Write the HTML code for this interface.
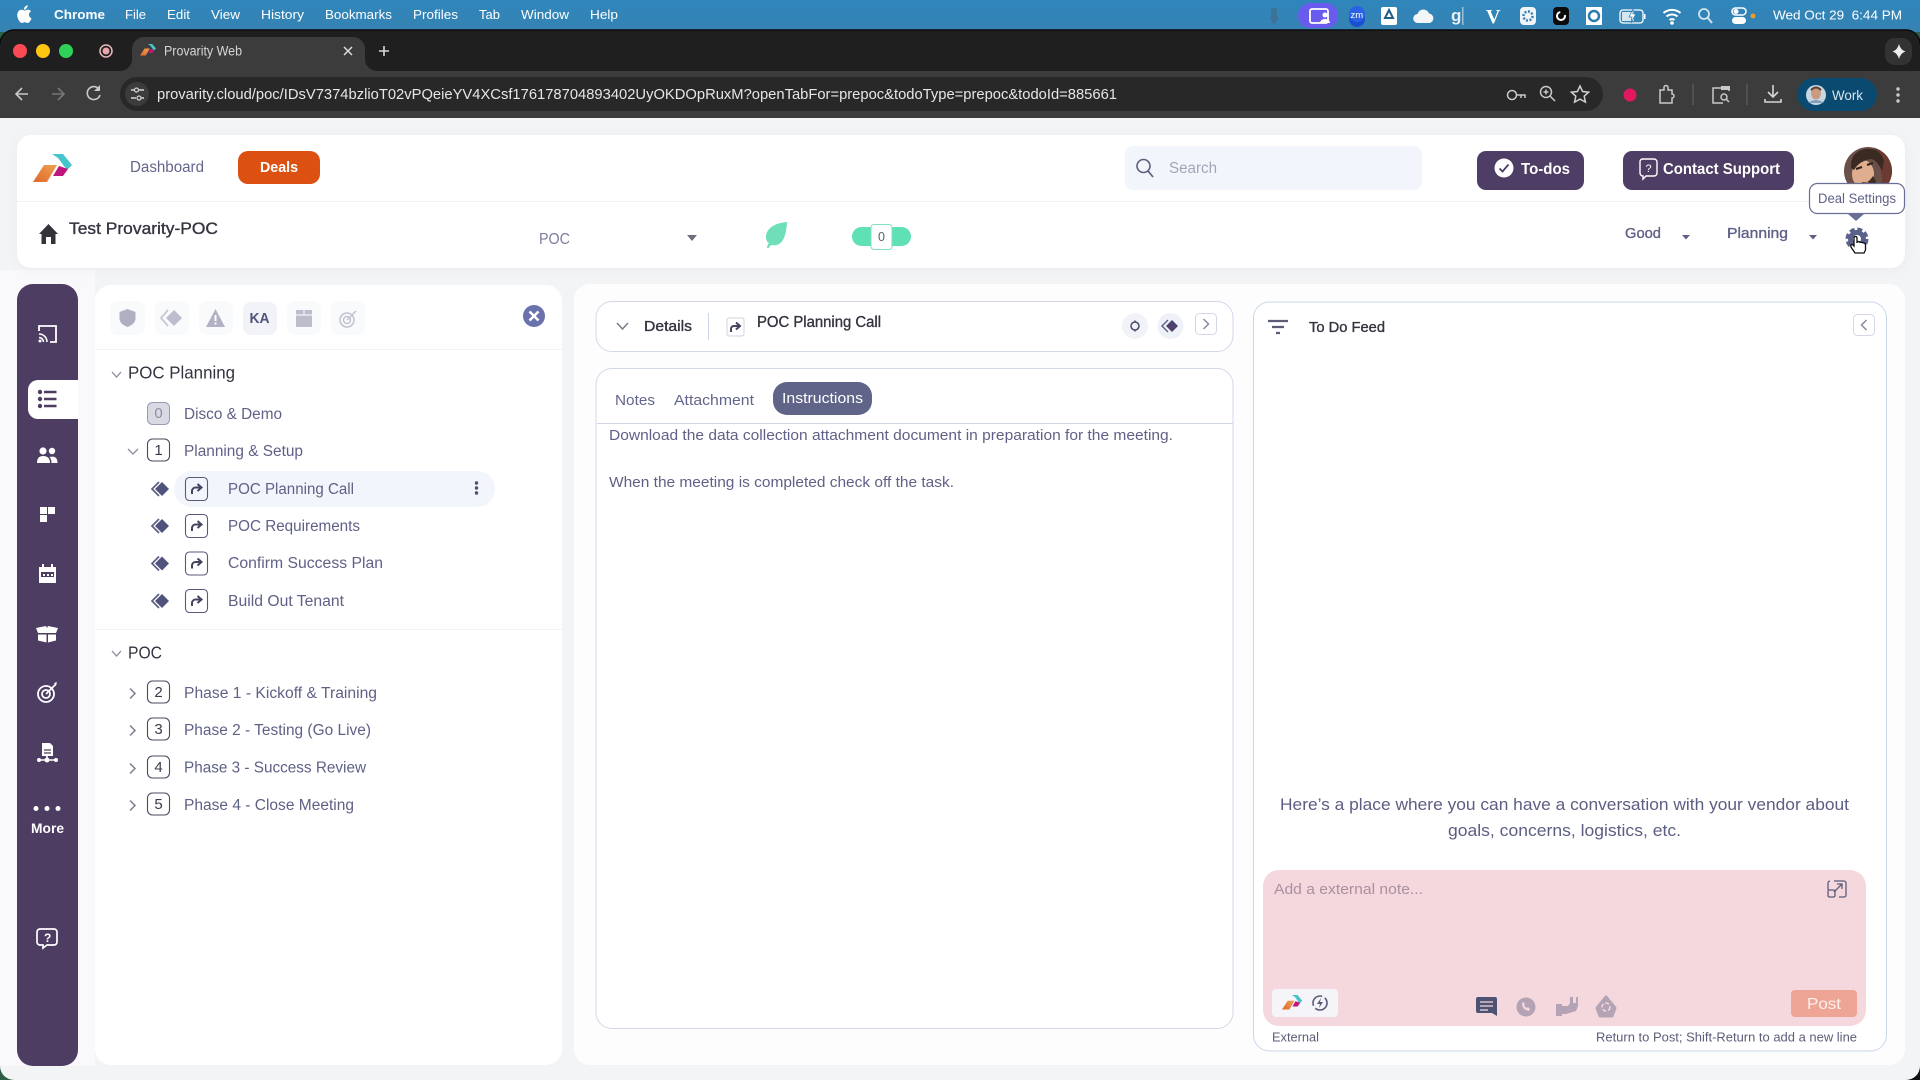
<!DOCTYPE html>
<html><head><meta charset="utf-8"><title>Provarity Web</title>
<style>
html,body{margin:0;padding:0;width:1920px;height:1080px;overflow:hidden;background:#2c5f45}
svg{display:block;position:absolute;left:0;top:0;filter:blur(.3px)}
text{font-family:"Liberation Sans",sans-serif}
.m{fill:#fff;font-size:13px}
.b{font-weight:bold}
.n{fill:#5f6186;font-size:15.5px}
.d{fill:#33343f}
.md{stroke-width:.35px}
</style></head><body>
<svg width="1920" height="1080" viewBox="0 0 1920 1080" xmlns="http://www.w3.org/2000/svg">
<defs>
<linearGradient id="mb" x1="0" y1="0" x2="0" y2="1"><stop offset="0" stop-color="#2f86bb"/><stop offset="1" stop-color="#3682b2"/></linearGradient>
<linearGradient id="lo" x1="0" y1="1" x2="1" y2="0"><stop offset="0" stop-color="#e0692c"/><stop offset="1" stop-color="#eea050"/></linearGradient>
<clipPath id="av"><circle cx="1868" cy="171" r="24"/></clipPath>
</defs>
<rect x="960" y="1040" width="960" height="40" fill="#111"/>
<rect width="1920" height="32" fill="url(#mb)"/>
<!-- window -->
<rect x="0" y="30" width="1920" height="1050" rx="14" fill="#1f1f1f"/>
<path d="M0 44a14 14 0 0 1 14-14H1906a14 14 0 0 1 14 14" fill="none" stroke="#0b0b0b" stroke-width="1.5"/>
<path d="M0 71H1920V1066a14 14 0 0 1-14 14H14a14 14 0 0 1-14-14Z" fill="#3c3c3c"/>
<path d="M0 118H1920V1066a14 14 0 0 1-14 14H14a14 14 0 0 1-14-14Z" fill="#f3f4f6"/>
<rect x="0" y="270" width="95" height="796" fill="#f9f9fb"/>
<!-- menubar -->
<path d="M26.5 9.2c.8-1 1.3-1.9 1.2-3-1 .1-2.1.7-2.8 1.600-.6.7-1.100 1.800-1 2.800 1.100.1 2-.5 2.600-1.400Zm1.300 1.600c-1.400-.1-2.600.8-3.300.8-.7 0-1.700-.8-2.900-.8-1.500 0-2.900.9-3.600 2.200-1.600 2.700-.4 6.600 1.100 8.800.7 1.100 1.600 2.300 2.800 2.200 1.100 0 1.500-.7 2.900-.7 1.300 0 1.700.7 2.900.7 1.200 0 1.900-1.100 2.600-2.100.8-1.200 1.200-2.400 1.200-2.500-1.400-.6-2.500-2-2.500-3.700 0-1.500.8-2.700 2.100-3.400-.8-1.100-2-1.700-3.300-1.700Z" fill="#fff" transform="translate(0,-1)"/>
<text x="54" y="19" class="m b" textLength="51" lengthAdjust="spacingAndGlyphs">Chrome</text>
<text x="125" y="19" class="m" textLength="21" lengthAdjust="spacingAndGlyphs">File</text>
<text x="167" y="19" class="m" textLength="23" lengthAdjust="spacingAndGlyphs">Edit</text>
<text x="211" y="19" class="m" textLength="29" lengthAdjust="spacingAndGlyphs">View</text>
<text x="261" y="19" class="m" textLength="43" lengthAdjust="spacingAndGlyphs">History</text>
<text x="325" y="19" class="m" textLength="67" lengthAdjust="spacingAndGlyphs">Bookmarks</text>
<text x="413" y="19" class="m" textLength="45" lengthAdjust="spacingAndGlyphs">Profiles</text>
<text x="479" y="19" class="m" textLength="21" lengthAdjust="spacingAndGlyphs">Tab</text>
<text x="521" y="19" class="m" textLength="48" lengthAdjust="spacingAndGlyphs">Window</text>
<text x="590" y="19" class="m" textLength="28" lengthAdjust="spacingAndGlyphs">Help</text>
<!-- status -->
<path d="M1271 8h6v9l2 0-5 8-5-8h2Z" fill="#3f6f8f" opacity=".8"/>
<rect x="1298" y="3" width="40" height="25" rx="12" fill="#6a5bef"/>
<rect x="1310" y="9" width="18" height="14" rx="2" fill="none" stroke="#fff" stroke-width="1.800"/>
<circle cx="1325" cy="15" r="2.500" fill="#fff"/><path d="M1320 23a5 4 0 0 1 10 0Z" fill="#fff"/>
<circle cx="1357" cy="19" r="8" fill="#1b4fd1"/><circle cx="1357" cy="14" r="8" fill="#2a62e6"/><text x="1350.500" y="18" font-size="9.500" fill="#fff">zm</text>
<rect x="1381" y="7" width="16" height="18" rx="2" fill="#fff"/><path d="M1389 10l4 8h-8Z" fill="none" stroke="#1f5f8a" stroke-width="2"/>
<path d="M1418 23a4.500 4.500 0 0 1-.5-9 6 6 0 0 1 11.500-.5 4.800 4.800 0 0 1 .5 9.500Z" fill="#f2f6f9"/>
<text x="1451" y="21" font-size="17" font-weight="bold" fill="#e6eff5">g</text><rect x="1462" y="7" width="1.500" height="18" fill="#9cc0d8"/>
<text x="1486" y="23" font-size="20" font-weight="bold" fill="#fff" style="font-family:'Liberation Serif',serif">V</text>
<rect x="1520" y="7" width="16" height="18" rx="4" fill="#eef4f8"/><circle cx="1528" cy="16" r="4.500" fill="none" stroke="#3a80b0" stroke-width="2.500" stroke-dasharray="2 1.500"/>
<rect x="1553" y="7" width="16" height="18" rx="4" fill="#0b0b0b"/><circle cx="1561" cy="16" r="4" fill="none" stroke="#fff" stroke-width="2" stroke-dasharray="18 6"/>
<rect x="1586" y="7" width="16" height="18" fill="#fff"/><circle cx="1594" cy="16" r="5" fill="none" stroke="#2e7cab" stroke-width="2.500"/>
<rect x="1620" y="10" width="23" height="13" rx="3" fill="none" stroke="#fff" stroke-width="1.300"/><rect x="1622" y="12" width="12" height="9" fill="#fff" opacity=".8"/><path d="M1633 9l-4 8h3l-1 6 5-9h-3Z" fill="#fff" stroke="#3682b2" stroke-width=".8"/><rect x="1644" y="14" width="1.500" height="5" fill="#fff"/>
<path d="M1663.500 13a13 13 0 0 1 17 0M1666.500 16.500a8.500 8.500 0 0 1 11 0M1669.500 20a4 4 0 0 1 5 0" fill="none" stroke="#fff" stroke-width="2"/><circle cx="1672" cy="23" r="1.800" fill="#fff"/>
<circle cx="1704" cy="14" r="5" fill="none" stroke="#cfe3ef" stroke-width="1.800"/><path d="M1708 18l4 5" stroke="#cfe3ef" stroke-width="2"/>
<rect x="1732" y="8" width="14" height="7" rx="3.500" fill="none" stroke="#fff" stroke-width="1.500"/><rect x="1732" y="17" width="14" height="7" rx="3.500" fill="#fff"/><circle cx="1736" cy="11.500" r="2.500" fill="#fff"/>
<circle cx="1753" cy="16" r="2.500" fill="#f0972e"/>
<text x="1773" y="19.500" class="m" textLength="129" lengthAdjust="spacingAndGlyphs" xml:space="preserve">Wed Oct 29  6:44 PM</text>
<!-- tab strip -->
<circle cx="20" cy="51" r="7" fill="#fc4a55"/><circle cx="43" cy="51" r="7" fill="#fdc613"/><circle cx="66" cy="51" r="7" fill="#2fd158"/>
<circle cx="106" cy="51" r="6" fill="none" stroke="#e9b8bc" stroke-width="1.500"/><circle cx="106" cy="51" r="3.500" fill="#e9a5ab"/>
<path d="M120 71a12 12 0 0 0 12-12V49a12 12 0 0 1 12-12H353a12 12 0 0 1 12 12V59a12 12 0 0 0 12 12Z" fill="#3c3c3c"/>
<g transform="translate(140,44) scale(.41) translate(-33,-154)"><path d="M33 182L44 165H57L47 182Z" fill="url(#lo)"/><path d="M52 154H63L72 165L67 170L58 158Z" fill="#47c4cc"/><path d="M53 176L59 166L68 169L63 176Z" fill="#c0167c"/></g>
<text x="164" y="55.500" font-size="13.500" fill="#d6d6d6" textLength="78" lengthAdjust="spacingAndGlyphs">Provarity Web</text>
<path d="M344 47l8 8M352 47l-8 8" stroke="#ddd" stroke-width="1.500"/>
<path d="M384 46v10M379 51h10" stroke="#d8d8d8" stroke-width="1.600"/>
<rect x="1885" y="38" width="27" height="27" rx="10" fill="#333"/>
<path d="M1899 44q1.500 6 6.500 7.500q-5 1.500-6.500 7.500q-1.500-6-6.500-7.500q5-1.500 6.500-7.500Z" fill="#eee"/>
<!-- toolbar -->
<path d="M28 94H17M22 88l-6 6 6 6" fill="none" stroke="#c9c9c9" stroke-width="1.600"/>
<path d="M52 94H63M58 88l6 6-6 6" fill="none" stroke="#777" stroke-width="1.600"/>
<path d="M99.500 90a6.500 6.500 0 1 0 .5 5" fill="none" stroke="#c9c9c9" stroke-width="1.600"/><path d="M100 85v6h-6" fill="#c9c9c9"/>
<rect x="120" y="77" width="1483" height="34" rx="17" fill="#282828"/>
<circle cx="137" cy="94" r="12" fill="#3c3c3c"/>
<path d="M131 90h3M139 90h5M131 98h5M141 98h3" stroke="#d5d5d5" stroke-width="1.400"/><circle cx="136.500" cy="90" r="2" fill="none" stroke="#d5d5d5" stroke-width="1.200"/><circle cx="139" cy="98" r="2" fill="none" stroke="#d5d5d5" stroke-width="1.200"/>
<text x="157" y="99" font-size="14.500" fill="#e6e6e6" textLength="960" lengthAdjust="spacingAndGlyphs">provarity.cloud/poc/IDsV7374bzlioT02vPQeieYV4XCsf176178704893402UyOKDOpRuxM?openTabFor=prepoc&amp;todoType=prepoc&amp;todoId=885661</text>
<circle cx="1512" cy="95" r="4.500" fill="none" stroke="#c9c9c9" stroke-width="1.500"/><path d="M1516 95h9v3M1521 95v3" fill="none" stroke="#c9c9c9" stroke-width="1.500"/>
<circle cx="1546" cy="92" r="5.500" fill="none" stroke="#c9c9c9" stroke-width="1.500"/><path d="M1550 96l5 5M1546 89.500v5M1543.500 92h5" stroke="#c9c9c9" stroke-width="1.500"/>
<path d="M1580 86l2.600 5.500 6 .7-4.400 4 1.200 5.900-5.400-3-5.400 3 1.200-5.900-4.400-4 6-.7Z" fill="none" stroke="#d0d0d0" stroke-width="1.500"/>
<circle cx="1630" cy="95" r="6.500" fill="#e0185f"/>
<path d="M1660 90h4v-2.500a2 2 0 0 1 4 0V90h4v4a2 2 0 0 1 0 4v5h-12Z" fill="none" stroke="#c9c9c9" stroke-width="1.500"/>
<rect x="1692.500" y="84" width="1" height="21" fill="#666"/>
<path d="M1717 88h-4v15h10M1717 88h12v3" fill="none" stroke="#c9c9c9" stroke-width="1.500"/><rect x="1721" y="86" width="9" height="4" fill="#c9c9c9"/><circle cx="1724" cy="97" r="3" fill="none" stroke="#c9c9c9" stroke-width="1.500"/><path d="M1726 99l3 3" stroke="#c9c9c9" stroke-width="1.500"/>
<rect x="1746.500" y="84" width="1" height="21" fill="#666"/>
<path d="M1773 85v12M1768 92l5 5 5-5M1765 99v3h16v-3" fill="none" stroke="#d5d5d5" stroke-width="1.600"/>
<rect x="1797" y="78" width="80" height="33" rx="16.500" fill="#0b4a70"/>
<circle cx="1816" cy="95" r="10" fill="#c7d6e2"/><ellipse cx="1816" cy="93" rx="5" ry="6.500" fill="#c99a7d"/><path d="M1811 90q5-5 10 0" stroke="#5b4034" stroke-width="2" fill="none"/><path d="M1808 103q8-6 16 0" fill="#7ea0bc"/>
<text x="1832" y="100" font-size="14" fill="#d5e5ef" textLength="31" lengthAdjust="spacingAndGlyphs">Work</text>
<circle cx="1898" cy="89" r="1.700" fill="#ccc"/><circle cx="1898" cy="95" r="1.700" fill="#ccc"/><circle cx="1898" cy="101" r="1.700" fill="#ccc"/>
<!-- header card -->
<rect x="17" y="135" width="1888" height="133" rx="14" fill="#fff" style="filter:drop-shadow(0 2px 6px rgba(70,70,100,.05))"/>
<rect x="17" y="201" width="1888" height="1" fill="#f0f1f4"/>
<path d="M33 182L44 165H57L47 182Z" fill="url(#lo)"/><path d="M52 154H63L72 165L67 170L58 158Z" fill="#47c4cc"/><path d="M53 176L59 166L68 169L63 176Z" fill="#c0167c"/>
<text x="130" y="172" font-size="15.500" fill="#64658c" textLength="74" lengthAdjust="spacingAndGlyphs">Dashboard</text>
<rect x="238" y="151" width="82" height="33" rx="10" fill="#dc5012"/>
<text x="260" y="172" font-size="15" font-weight="bold" fill="#fff" textLength="38" lengthAdjust="spacingAndGlyphs">Deals</text>
<rect x="1125" y="146" width="297" height="44" rx="8" fill="#f3f5fd"/>
<circle cx="1143.500" cy="166" r="6.500" fill="none" stroke="#5c5e7c" stroke-width="1.600"/><path d="M1148 171l5 6" stroke="#5c5e7c" stroke-width="1.700"/>
<text x="1169" y="173" font-size="15.500" fill="#a4a5b5" textLength="48" lengthAdjust="spacingAndGlyphs">Search</text>
<rect x="1477" y="151" width="107" height="39" rx="9" fill="#4e3d64"/>
<circle cx="1504" cy="168" r="9.500" fill="#fff"/><path d="M1499.500 168.500l3 3 6-7" fill="none" stroke="#4e3d64" stroke-width="1.800"/>
<text x="1521" y="174" font-size="15.500" font-weight="bold" fill="#fff" textLength="49" lengthAdjust="spacingAndGlyphs">To-dos</text>
<rect x="1623" y="151" width="171" height="39" rx="9" fill="#4e3d64"/>
<path d="M1642 159h12a3 3 0 0 1 3 3v11a3 3 0 0 1-3 3h-8l-3 3v-3a3 3 0 0 1-3-3v-11a3 3 0 0 1 2-3Z" fill="none" stroke="#fff" stroke-width="1.400"/><text x="1645.500" y="172" font-size="11" fill="#fff">?</text>
<text x="1663" y="174" font-size="15.500" font-weight="bold" fill="#fff" textLength="117" lengthAdjust="spacingAndGlyphs">Contact Support</text>
<!-- avatar -->
<g clip-path="url(#av)"><rect x="1844" y="147" width="48" height="48" fill="#6a5048"/><path d="M1874 147h18v48h-12q6-20-6-48Z" fill="#6b3a30"/><ellipse cx="1863" cy="174" rx="11" ry="14" fill="#dfae8e"/><path d="M1851 168q-1-16 14-19q15-2 19 12l-2 10q-5-11-11-12q-12 2-17 11Z" fill="#3a2a22"/><path d="M1853 182q4 4 10 0q5 2 10-6l3 5-3 14h-17Z" fill="#3f2b23"/><path d="M1856 169l6-2M1867 165l6-2" stroke="#2e211b" stroke-width="2"/><path d="M1860 184q5 2 8-2" stroke="#c96a5e" stroke-width="2" fill="none"/></g>
<!-- second row -->
<path d="M39 234L48.500 224 58 234H55.500V244H51V237H46V244H41.500V234Z" fill="#33343b"/>
<text x="69" y="234" font-size="17" class="md" fill="#33343f" stroke="#33343f" textLength="149" lengthAdjust="spacingAndGlyphs">Test Provarity-POC</text>
<text x="539" y="244" font-size="15.500" fill="#7b7c9e" textLength="31" lengthAdjust="spacingAndGlyphs">POC</text>
<path d="M687 235h10l-5 6Z" fill="#6e6e7c"/>
<path d="M787 222c-13 1-21 7-21 15 0 3 1 5 3 6-1 1-2 3-2 5l1.500 0 2.500-3c9 2 15-4 16-23Z" fill="#6fdfba"/>
<rect x="852" y="227" width="59" height="19" rx="9.500" fill="#5fe0b5"/>
<rect x="871" y="224.500" width="21" height="25" rx="3" fill="#fff" stroke="#7fe0c4" stroke-width="1"/>
<text x="881.500" y="241" font-size="12.500" fill="#5d5e6e" text-anchor="middle">0</text>
<text x="1625" y="238" font-size="15" class="md" fill="#5d5f85" stroke="#5d5f85" textLength="36" lengthAdjust="spacingAndGlyphs">Good</text>
<path d="M1682 235h8l-4 4.500Z" fill="#5d5f85"/>
<text x="1727" y="238" font-size="15" class="md" fill="#5d5f85" stroke="#5d5f85" textLength="61" lengthAdjust="spacingAndGlyphs">Planning</text>
<path d="M1809 235h8l-4 4.500Z" fill="#5d5f85"/>
<circle cx="1857" cy="239" r="6.500" fill="none" stroke="#5b6189" stroke-width="5"/><circle cx="1857" cy="239" r="9.800" fill="none" stroke="#5b6189" stroke-width="3.400" stroke-dasharray="5 2.700"/>
<path d="M1855 253l-4-6c-1-2 1-3 2-2l1 1v-8c0-2 3-2 3 0v5c0-2 3-2 3 0 0-1 3-1 3 .5 0-1 2.500-.5 2.500 1V250l-1.500 3Z" fill="#fff" stroke="#111" stroke-width="1.300"/>
<rect x="1809.500" y="183.500" width="95" height="30" rx="8" fill="#fff" stroke="#6a6f95" stroke-width="1.200"/>
<path d="M1848 214h16l-8 7Z" fill="#6a6f95"/>
<text x="1818" y="203" font-size="13.500" fill="#5f6186" textLength="78" lengthAdjust="spacingAndGlyphs">Deal Settings</text>
<!-- sidebar -->
<rect x="17" y="284" width="61" height="782" rx="16" fill="#4d3d62"/>
<path d="M39 331v-5h17v16h-6" fill="none" stroke="#fff" stroke-width="1.800"/><path d="M39 334a8 8 0 0 1 8 8M39 337.500a4.500 4.500 0 0 1 4.500 4.500" fill="none" stroke="#fff" stroke-width="1.600"/><circle cx="40" cy="341" r="1.500" fill="#fff"/>
<path d="M78 380H38a10 10 0 0 0-10 10v19a10 10 0 0 0 10 10H78Z" fill="#fff"/>
<circle cx="40" cy="392" r="2.200" fill="#4d3d62"/><circle cx="40" cy="399" r="2.200" fill="#4d3d62"/><circle cx="40" cy="406" r="2.200" fill="#4d3d62"/>
<path d="M44 392H56.500M44 399H56.500M44 406H56.500" stroke="#4d3d62" stroke-width="2.600"/>
<g transform="translate(0,1)"><circle cx="43" cy="450" r="3.600" fill="#fff"/><circle cx="52" cy="450" r="3.200" fill="#fff"/><path d="M37 462q0-7 6-7q7 0 7 7ZM51.500 462q0-4-2-6q8-2 8 6Z" fill="#fff"/></g>
<rect x="40" y="507" width="7" height="7" fill="#fff"/><rect x="48" y="507" width="7" height="7" fill="#fff"/><rect x="40" y="515" width="7" height="7" fill="#fff"/>
<path d="M39 567h17v16H39Z" fill="#fff"/><rect x="42" y="564" width="2" height="4" fill="#fff"/><rect x="51" y="564" width="2" height="4" fill="#fff"/><rect x="41" y="572" width="13" height="5" fill="#4d3d62"/><rect x="43" y="574" width="2" height="2" fill="#fff"/><rect x="47" y="574" width="2" height="2" fill="#fff"/><rect x="51" y="574" width="2" height="2" fill="#fff"/>
<path d="M36 628l10-2 1 2 1-2 10 2-2 5H38ZM38 634.500h8.500v8l-8.500-2ZM48 634.500h8v6l-8 2Z" fill="#fff"/>
<g transform="translate(0,-1)"><circle cx="46" cy="695" r="8" fill="none" stroke="#fff" stroke-width="1.800"/><circle cx="46" cy="695" r="4" fill="none" stroke="#fff" stroke-width="1.800"/><path d="M46 695l10-10" stroke="#fff" stroke-width="1.800"/><path d="M54 684l3-1-1 3Z" fill="#fff"/></g>
<path d="M42 743h8l3 3v10H42Z" fill="#fff"/><path d="M44 750h7M44 753h7" stroke="#4d3d62" stroke-width="1.300"/><path d="M47 756v5M39 760H56" stroke="#fff" stroke-width="1.600"/><circle cx="39" cy="760" r="2" fill="#fff"/><circle cx="47" cy="760" r="2.500" fill="#fff"/><circle cx="56" cy="760" r="2" fill="#fff"/>
<circle cx="36" cy="808.500" r="2.500" fill="#fff"/><circle cx="47" cy="808.500" r="2.500" fill="#fff"/><circle cx="58" cy="808.500" r="2.500" fill="#fff"/>
<text x="31" y="833" font-size="14" font-weight="bold" fill="#fff" textLength="33" lengthAdjust="spacingAndGlyphs">More</text>
<g transform="translate(0,-1)"><path d="M40 930h14a3 3 0 0 1 3 3v10a3 3 0 0 1-3 3h-7l-4 3v-3h-3a3 3 0 0 1-3-3v-10a3 3 0 0 1 3-3Z" fill="none" stroke="#fff" stroke-width="1.700"/><text x="44" y="943" font-size="12" font-weight="bold" fill="#fff">?</text></g>
<!-- left panel -->
<rect x="95" y="285" width="467" height="780" rx="16" fill="#fff"/>
<rect x="95" y="349" width="467" height="1" fill="#f1f2f5"/>
<g fill="#f9fafc"><rect x="110" y="301" width="35" height="34" rx="8"/><rect x="155" y="301" width="34" height="34" rx="8"/><rect x="199" y="301" width="34" height="34" rx="8"/><rect x="287" y="301" width="34" height="34" rx="8"/><rect x="331" y="301" width="34" height="34" rx="8"/></g>
<rect x="243" y="302" width="34" height="33" rx="8" fill="#f1f3f8"/>
<path d="M127.500 309l8 3v6c0 5-3.500 7-8 9-4.500-2-8-4-8-9v-6Z" fill="#aeb0c2"/>
<path d="M168 310l-7 8 7 8" fill="none" stroke="#c6c8d6" stroke-width="1.800"/><path d="M174 310l8 8-8 8-8-8Z" fill="#bcbecd"/>
<path d="M215.500 309l9.500 18h-19Z" fill="#b0b2c3"/><rect x="214.500" y="315" width="2" height="6" fill="#fff"/><rect x="214.500" y="322.500" width="2" height="2" fill="#fff"/>
<text x="249.500" y="323" font-size="15" font-weight="bold" fill="#50537a" textLength="20" lengthAdjust="spacingAndGlyphs">KA</text>
<rect x="296" y="310" width="16" height="17" fill="#bcbecd"/><path d="M296 315H312M304 310v5" stroke="#fff" stroke-width="1"/>
<circle cx="347" cy="320" r="7" fill="none" stroke="#c0c2d0" stroke-width="1.500"/><circle cx="347" cy="320" r="3.500" fill="none" stroke="#c0c2d0" stroke-width="1.500"/><path d="M347 320l9-9" stroke="#c0c2d0" stroke-width="1.500"/>
<circle cx="534" cy="316" r="11" fill="#6a72ae"/><path d="M529.500 311.500l9 9M538.500 311.500l-9 9" stroke="#fff" stroke-width="2.600"/>
<path d="M112 372l4.500 5 4.500-5" fill="none" stroke="#8a8b9c" stroke-width="1.300"/>
<text x="128" y="378.500" font-size="17.500" class="d" textLength="107" lengthAdjust="spacingAndGlyphs">POC Planning</text>
<rect x="147.500" y="402.500" width="22" height="22" rx="5" fill="#d8d9e3" stroke="#9a9cb2"/>
<text x="158.500" y="418" font-size="15" fill="#8d8fa5" text-anchor="middle">0</text>
<text x="184" y="419" class="n" textLength="98" lengthAdjust="spacingAndGlyphs">Disco &amp; Demo</text>
<path d="M128 449l5 5 5-5" fill="none" stroke="#8a8b9c" stroke-width="1.300"/>
<rect x="147.500" y="439" width="22" height="22" rx="5" fill="#fff" stroke="#4a4b5e" stroke-width="1.100"/>
<text x="158.500" y="455" font-size="15" fill="#3a3b4c" text-anchor="middle">1</text>
<text x="184" y="456" class="n" textLength="119" lengthAdjust="spacingAndGlyphs">Planning &amp; Setup</text>
<rect x="174" y="471" width="321" height="36" rx="18" fill="#f3f5fd"/>
<!-- rows -->
<g><path d="M159 482l-7 7 7 7" fill="none" stroke="#5b5e86" stroke-width="1.700"/><path d="M162 482l7 7-7 7-7-7Z" fill="#50537c"/><rect x="185.500" y="477.500" width="22" height="23" rx="4" fill="none" stroke="#585a78" stroke-width="1.100"/><path d="M192 494v-3a3.500 3.500 0 0 1 3.500-3.500H201M197.500 484l4 3.500-4 3.500" fill="none" stroke="#43455f" stroke-width="2"/></g>
<text x="228" y="494" class="n" textLength="126" lengthAdjust="spacingAndGlyphs">POC Planning Call</text>
<circle cx="476.500" cy="483" r="1.700" fill="#4d4f70"/><circle cx="476.500" cy="488" r="1.700" fill="#4d4f70"/><circle cx="476.500" cy="493" r="1.700" fill="#4d4f70"/>
<g transform="translate(0,37)"><path d="M159 482l-7 7 7 7" fill="none" stroke="#5b5e86" stroke-width="1.700"/><path d="M162 482l7 7-7 7-7-7Z" fill="#50537c"/><rect x="185.500" y="477.500" width="22" height="23" rx="4" fill="none" stroke="#585a78" stroke-width="1.100"/><path d="M192 494v-3a3.500 3.500 0 0 1 3.500-3.500H201M197.500 484l4 3.500-4 3.500" fill="none" stroke="#43455f" stroke-width="2"/></g>
<text x="228" y="531" class="n" textLength="132" lengthAdjust="spacingAndGlyphs">POC Requirements</text>
<g transform="translate(0,74.500)"><path d="M159 482l-7 7 7 7" fill="none" stroke="#5b5e86" stroke-width="1.700"/><path d="M162 482l7 7-7 7-7-7Z" fill="#50537c"/><rect x="185.500" y="477.500" width="22" height="23" rx="4" fill="none" stroke="#585a78" stroke-width="1.100"/><path d="M192 494v-3a3.500 3.500 0 0 1 3.500-3.500H201M197.500 484l4 3.500-4 3.500" fill="none" stroke="#43455f" stroke-width="2"/></g>
<text x="228" y="568" class="n" textLength="155" lengthAdjust="spacingAndGlyphs">Confirm Success Plan</text>
<g transform="translate(0,112)"><path d="M159 482l-7 7 7 7" fill="none" stroke="#5b5e86" stroke-width="1.700"/><path d="M162 482l7 7-7 7-7-7Z" fill="#50537c"/><rect x="185.500" y="477.500" width="22" height="23" rx="4" fill="none" stroke="#585a78" stroke-width="1.100"/><path d="M192 494v-3a3.500 3.500 0 0 1 3.500-3.500H201M197.500 484l4 3.500-4 3.500" fill="none" stroke="#43455f" stroke-width="2"/></g>
<text x="228" y="606" class="n" textLength="116" lengthAdjust="spacingAndGlyphs">Build Out Tenant</text>
<rect x="95" y="629" width="467" height="1" fill="#f1f2f5"/>
<path d="M112 651l4.500 5 4.500-5" fill="none" stroke="#8a8b9c" stroke-width="1.300"/>
<text x="128" y="658.500" font-size="17.500" class="d" textLength="34" lengthAdjust="spacingAndGlyphs">POC</text>
<!-- phases -->
<path d="M130 688.500l5 5-5 5" fill="none" stroke="#7d7e90" stroke-width="1.500"/>
<rect x="147.500" y="681" width="22" height="22" rx="5" fill="#fff" stroke="#4a4b5e" stroke-width="1.100"/><text x="158.500" y="697" font-size="15" fill="#3a3b4c" text-anchor="middle">2</text>
<text x="184" y="698" class="n" textLength="193" lengthAdjust="spacingAndGlyphs">Phase 1 - Kickoff &amp; Training</text>
<path d="M130 725.500l5 5-5 5" fill="none" stroke="#7d7e90" stroke-width="1.500"/>
<rect x="147.500" y="718" width="22" height="22" rx="5" fill="#fff" stroke="#4a4b5e" stroke-width="1.100"/><text x="158.500" y="734" font-size="15" fill="#3a3b4c" text-anchor="middle">3</text>
<text x="184" y="735" class="n" textLength="187" lengthAdjust="spacingAndGlyphs">Phase 2 - Testing (Go Live)</text>
<path d="M130 763.500l5 5-5 5" fill="none" stroke="#7d7e90" stroke-width="1.500"/>
<rect x="147.500" y="756" width="22" height="22" rx="5" fill="#fff" stroke="#4a4b5e" stroke-width="1.100"/><text x="158.500" y="772" font-size="15" fill="#3a3b4c" text-anchor="middle">4</text>
<text x="184" y="772.500" class="n" textLength="182" lengthAdjust="spacingAndGlyphs">Phase 3 - Success Review</text>
<path d="M130 800.500l5 5-5 5" fill="none" stroke="#7d7e90" stroke-width="1.500"/>
<rect x="147.500" y="793" width="22" height="22" rx="5" fill="#fff" stroke="#4a4b5e" stroke-width="1.100"/><text x="158.500" y="809" font-size="15" fill="#3a3b4c" text-anchor="middle">5</text>
<text x="184" y="810" class="n" textLength="170" lengthAdjust="spacingAndGlyphs">Phase 4 - Close Meeting</text>
<!-- main panel -->
<rect x="574" y="284" width="1331" height="781" rx="16" fill="#fdfdfe"/>
<rect x="596" y="301.500" width="637" height="50" rx="16" fill="#fff" stroke="#d3d8e8"/>
<path d="M617 323l5.500 6 5.500-6" fill="none" stroke="#7b7c8c" stroke-width="1.500"/>
<text x="644" y="331" font-size="14.500" class="md" fill="#33343f" stroke="#33343f" textLength="48" lengthAdjust="spacingAndGlyphs">Details</text>
<rect x="708" y="313" width="1" height="27" fill="#cdd6e6"/>
<rect x="727" y="318" width="17" height="18" rx="2" fill="none" stroke="#d0d2de"/><path d="M731 332v-3a3 3 0 0 1 3-3h6M736 322.500l4 3.500-4 3.500" fill="none" stroke="#43455f" stroke-width="2"/>
<text x="757" y="327" font-size="15.500" class="md" fill="#33343f" stroke="#33343f" textLength="124" lengthAdjust="spacingAndGlyphs">POC Planning Call</text>
<circle cx="1135" cy="326" r="13" fill="#f1f3f9"/><circle cx="1135" cy="326" r="4" fill="none" stroke="#4a4c6a" stroke-width="1.500"/><path d="M1135 320.500v2M1135 329.500v2" stroke="#4a4c6a" stroke-width="1.500"/>
<circle cx="1170.500" cy="326" r="13" fill="#eff1f8"/><path d="M1168 320l-6 6 6 6" fill="none" stroke="#5b5e86" stroke-width="1.400"/><path d="M1172 320l6 6-6 6-6-6Z" fill="#50406e"/>
<rect x="1195.500" y="313.500" width="21" height="21" rx="4" fill="#fff" stroke="#d3d8e8"/><path d="M1203.500 319l5 5-5 5" fill="none" stroke="#8a8b9c" stroke-width="1.500"/>
<rect x="596" y="368.500" width="637" height="660" rx="16" fill="#fff" stroke="#d3d8e8"/>
<rect x="597" y="423" width="636" height="1" fill="#cfd5e4"/>
<text x="615" y="405" font-size="15" fill="#64658c" textLength="40" lengthAdjust="spacingAndGlyphs">Notes</text>
<text x="674" y="405" font-size="15" fill="#64658c" textLength="80" lengthAdjust="spacingAndGlyphs">Attachment</text>
<rect x="773" y="382" width="99" height="33" rx="14" fill="#5f6488"/>
<text x="782" y="403" font-size="14.500" fill="#fff" textLength="81" lengthAdjust="spacingAndGlyphs">Instructions</text>
<text x="609" y="440" font-size="15" fill="#5f6186" textLength="564" lengthAdjust="spacingAndGlyphs">Download the data collection attachment document in preparation for the meeting.</text>
<text x="609" y="487" font-size="15" fill="#5f6186" textLength="345" lengthAdjust="spacingAndGlyphs">When the meeting is completed check off the task.</text>
<!-- feed -->
<rect x="1253.500" y="302" width="633" height="749" rx="16" fill="#fff" stroke="#c9d7e8"/>
<path d="M1268 321H1288M1272 327H1284M1276 333H1280" stroke="#5a5c78" stroke-width="2.200"/>
<text x="1309" y="332" font-size="14.500" class="md" fill="#33343f" stroke="#33343f" textLength="76" lengthAdjust="spacingAndGlyphs">To Do Feed</text>
<rect x="1853.500" y="314.500" width="21" height="21" rx="4" fill="#fff" stroke="#d3d8e8"/><path d="M1866.500 320l-5 5 5 5" fill="none" stroke="#8a8b9c" stroke-width="1.500"/>
<text x="1280" y="810" font-size="16.500" fill="#5c5e82" textLength="569" lengthAdjust="spacingAndGlyphs">Here’s a place where you can have a conversation with your vendor about</text>
<text x="1448" y="836" font-size="16.500" fill="#5c5e82" textLength="233" lengthAdjust="spacingAndGlyphs">goals, concerns, logistics, etc.</text>
<rect x="1263" y="870" width="603" height="156" rx="16" fill="#f5d8de"/>
<text x="1274" y="894" font-size="15" fill="#a8919f" textLength="149" lengthAdjust="spacingAndGlyphs">Add a external note...</text>
<path d="M1834 881h10a2 2 0 0 1 2 2v12a2 2 0 0 1-2 2h-5M1828 890v-7a2 2 0 0 1 2-2" fill="none" stroke="#5a5c78" stroke-width="1.300"/><rect x="1828" y="890" width="7" height="7" rx="1.500" fill="none" stroke="#5a5c78" stroke-width="1.300"/><path d="M1834 892l8-8M1837 884h5v5" fill="none" stroke="#5a5c78" stroke-width="1.300"/>
<rect x="1272" y="989" width="66" height="28" rx="4" fill="#f4f4f9"/>
<g transform="translate(1282,995) scale(.52) translate(-33,-154)"><path d="M33 182L44 165H57L47 182Z" fill="url(#lo)"/><path d="M52 154H63L72 165L67 170L58 158Z" fill="#47c4cc"/><path d="M53 176L59 166L68 169L63 176Z" fill="#c0167c"/></g>
<circle cx="1320" cy="1003" r="7" fill="none" stroke="#5a5c78" stroke-width="1.600" stroke-dasharray="16 3"/><path d="M1321 998l-4 6h3l-1 4 4-6h-3Z" fill="#5a5c78"/>
<path d="M1478 997h17a2 2 0 0 1 2 2v12l0 5-5-3h-14a2 2 0 0 1-2-2v-12a2 2 0 0 1 2-2Z" fill="#4e5273"/><path d="M1480 1002h13M1480 1006h13M1480 1010h8" stroke="#f5d8de" stroke-width="1.300"/>
<circle cx="1526" cy="1007" r="9.500" fill="#b3a3b4"/><path d="M1522 1003q0 7 7 8l1-2-2-2-1 1q-2-1-3-3l1-1-2-2Z" fill="#f5d8de"/>
<path d="M1556 1004h6v2l6 0 2-3v-6h3v6h3v-6h2v9l-2 5-10 3h-4v2h-6Z" fill="#b3a3b4"/>
<path d="M1606 997l9 11-3 8h-12l-3-8Z" fill="#b3a3b4" stroke="#b3a3b4" stroke-width="3" stroke-linejoin="round"/><circle cx="1606" cy="1007" r="4" fill="none" stroke="#f5d8de" stroke-width="1.500" stroke-dasharray="4 2"/>
<rect x="1791" y="990" width="66" height="27" rx="4" fill="#eea595"/>
<text x="1807" y="1009" font-size="16" fill="#fdf1ee" textLength="34" lengthAdjust="spacingAndGlyphs">Post</text>
<text x="1272" y="1041.500" font-size="13" fill="#5c5e7a" textLength="47" lengthAdjust="spacingAndGlyphs">External</text>
<text x="1596" y="1041.500" font-size="13" fill="#5c5e7a" textLength="261" lengthAdjust="spacingAndGlyphs">Return to Post; Shift-Return to add a new line</text>
</svg>
</body></html>
